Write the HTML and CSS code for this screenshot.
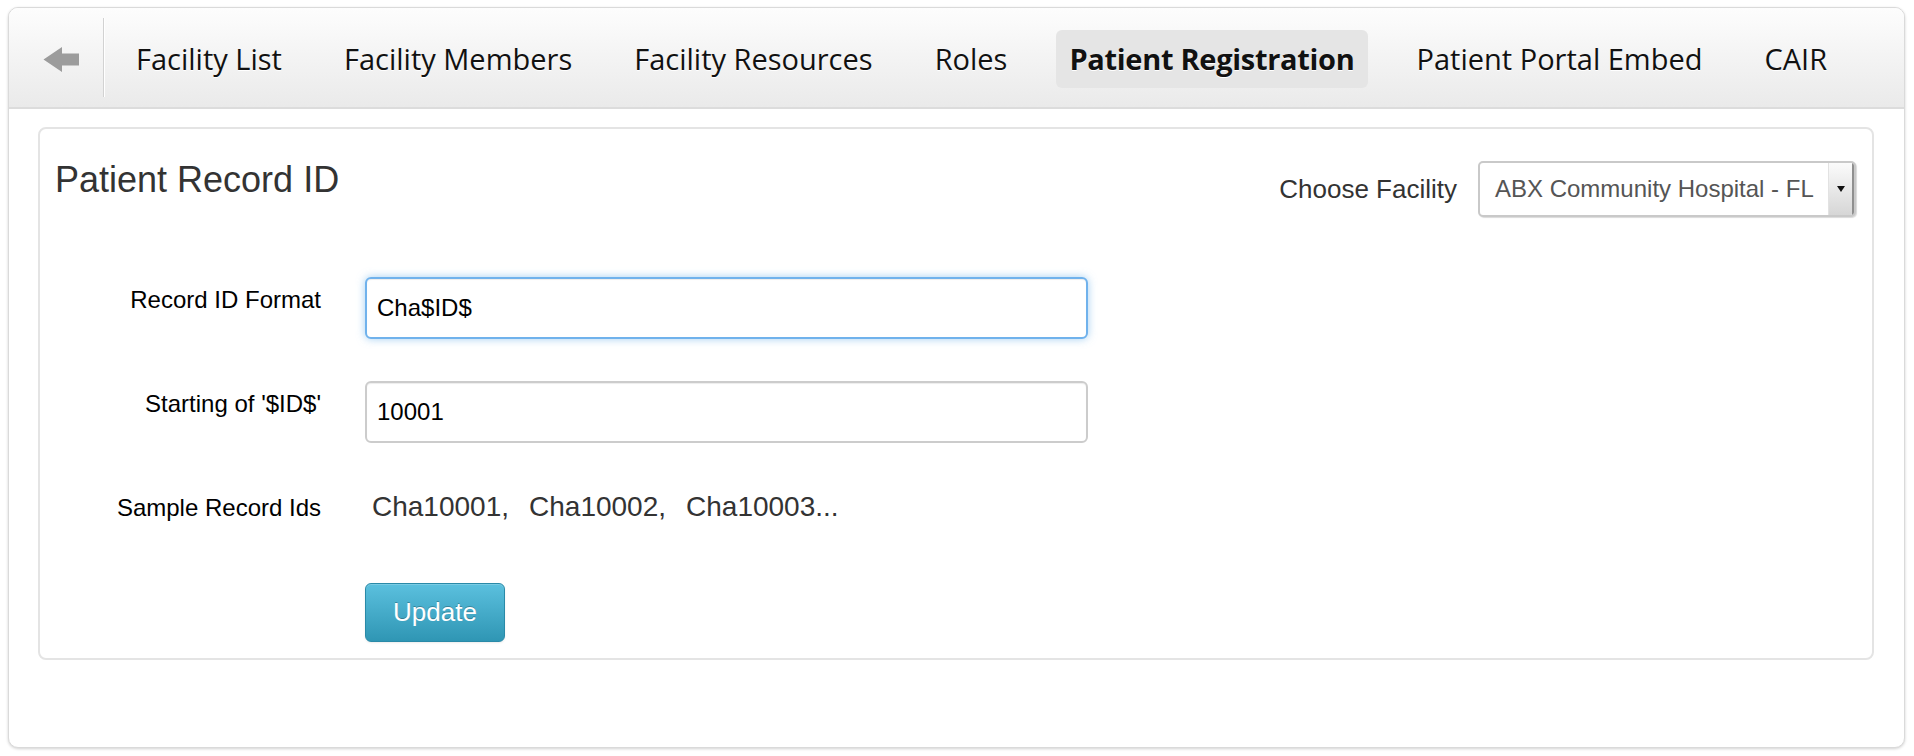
FILE: index.html
```html
<!DOCTYPE html>
<html>
<head>
<meta charset="utf-8">
<title>Patient Registration</title>
<link rel="stylesheet" href="styles.css">
</head>
<body>
<div class="frame">
  <nav class="navbar">
    <span class="back">
      <svg width="36" height="27" viewBox="0 0 36 27"><path d="M0.5 13.5 L19 1 L19 7.5 L36 7.5 L36 19.5 L19 19.5 L19 26 Z" fill="#9c9c9c"/></svg>
    </span>
    <span class="divider"></span>
    <ul class="tabs">
      <li class="tab">Facility List</li>
      <li class="tab">Facility Members</li>
      <li class="tab">Facility Resources</li>
      <li class="tab">Roles</li>
      <li class="tab active">Patient Registration</li>
      <li class="tab">Patient Portal Embed</li>
      <li class="tab">CAIR</li>
    </ul>
  </nav>
  <div class="main">
    <section class="card">
      <div class="card-head">
        <h2 class="title">Patient Record ID</h2>
        <div class="facility">
          <span class="facility-label">Choose Facility</span>
          <div class="select">
            <span class="select-text">ABX Community Hospital - FL</span>
            <span class="select-btn"><span class="caret"></span></span>
          </div>
        </div>
      </div>
      <div class="form">
        <div class="row">
          <label class="label">Record ID Format</label>
          <input class="field focus" type="text" value="Cha$ID$">
        </div>
        <div class="row">
          <label class="label">Starting of '$ID$'</label>
          <input class="field" type="text" value="10001">
        </div>
        <div class="row row-static">
          <span class="label">Sample Record Ids</span>
          <div class="samples"><span>Cha10001,</span><span>Cha10002,</span><span>Cha10003...</span></div>
        </div>
        <div class="row row-last">
          <span class="label"></span>
          <button class="btn" type="button">Update</button>
        </div>
      </div>
    </section>
  </div>
</div>
</body>
</html>
```

FILE: styles.css
```css
* { box-sizing: border-box; }
html, body { margin: 0; background: #fff; }
body {
  padding: 7px 9px 8px 8px;
  font-family: "Liberation Sans", Arial, sans-serif;
}
.frame {
  height: 741px;
  border: 1px solid #dadada;
  border-radius: 10px;
  box-shadow: 0 1px 3px rgba(0,0,0,0.18);
  overflow: hidden;
  background: #fff;
}
.navbar {
  height: 101px;
  display: flex;
  align-items: flex-start;
  padding-left: 34px;
  background: linear-gradient(#fdfdfd, #eaeaea);
  border-bottom: 2px solid #dcdcdc;
}
.back {
  display: block;
  width: 36px;
  height: 27px;
  margin-top: 38px;
}
.back svg { display: block; }
.divider {
  display: block;
  width: 2px;
  height: 79px;
  margin-top: 10px;
  margin-left: 24px;
  border-left: 1px solid #d2d2d2;
  border-right: 1px solid #ffffff;
}
.tabs {
  list-style: none;
  margin: 22px 0 0 18px;
  padding: 0;
  display: flex;
  gap: 36px;
}
.tab {
  height: 58px;
  line-height: 58px;
  padding: 0 13px;
  border-radius: 6px;
  font-family: "Open Sans", sans-serif;
  font-size: 29px;
  color: #111;
  text-shadow: 0 1px 0 #fff;
  white-space: nowrap;
}
.tab.active {
  background: #e5e5e5;
  font-weight: bold;
  letter-spacing: -0.3px;
}
.main {
  padding: 18px 30px 0 29px;
}
.card {
  border: 2px solid #e4e4e4;
  border-radius: 8px;
  padding: 31px 16px 16px 15px;
}
.card-head {
  display: flex;
  justify-content: space-between;
  align-items: flex-start;
}
.title {
  margin: 0;
  font-size: 36px;
  line-height: 40px;
  font-weight: normal;
  color: #333;
}
.facility {
  display: flex;
  align-items: center;
  gap: 21px;
  margin-top: 1px;
}
.facility-label {
  font-size: 26px;
  color: #333;
}
.select {
  width: 378px;
  height: 56px;
  display: flex;
  border: 2px solid #c9c9c9;
  border-radius: 5px;
  background: #fff;
  box-shadow: 1px 1px 1px rgba(0,0,0,0.15);
  overflow: hidden;
}
.select-text {
  flex: 1;
  padding-left: 15px;
  font-size: 24px;
  line-height: 52px;
  color: #555;
  white-space: nowrap;
  overflow: hidden;
}
.select-btn {
  flex: 0 0 26px;
  display: flex;
  align-items: center;
  justify-content: center;
  background: linear-gradient(#fbfbfb, #d6d6d6);
  border-left: 1px solid #e2e2e2;
  border-right: 2px solid #8f8f8f;
}
.caret {
  width: 0;
  height: 0;
  border-left: 4px solid transparent;
  border-right: 4px solid transparent;
  border-top: 6px solid #111;
}
.form {
  margin-top: 60px;
}
.row {
  display: flex;
  align-items: flex-start;
  margin-bottom: 42px;
}
.row-last { margin-bottom: 0; }
.row-static { height: 56px; }
.label {
  flex: 0 0 266px;
  margin-right: 44px;
  padding-top: 11px;
  text-align: right;
  font-size: 24px;
  line-height: 24px;
  color: #000;
}
.field {
  width: 723px;
  height: 62px;
  margin: 0;
  padding: 0 10px;
  border: 2px solid #cccccc;
  border-radius: 6px;
  background: #fff;
  font-family: "Liberation Sans", Arial, sans-serif;
  font-size: 24px;
  color: #000;
  outline: none;
  box-shadow: inset 0 1px 1px rgba(0,0,0,0.075);
}
.field.focus {
  border-color: #70b2ec;
  box-shadow: inset 0 1px 1px rgba(0,0,0,0.075), 0 0 8px rgba(102,175,233,0.6);
}
.samples {
  display: flex;
  gap: 20px;
  margin-left: 7px;
  padding-top: 6px;
  font-size: 28px;
  line-height: 32px;
  color: #333;
}
.btn {
  width: 140px;
  height: 59px;
  margin: 0;
  padding: 0;
  border: 1px solid #2a8aa8;
  border-radius: 6px;
  background: linear-gradient(#5bc0de, #2f96b4);
  color: #fff;
  font-family: "Liberation Sans", Arial, sans-serif;
  font-size: 26px;
  text-shadow: 0 -1px 0 rgba(0,0,0,0.25);
  box-shadow: inset 0 1px 0 rgba(255,255,255,0.2), 0 1px 2px rgba(0,0,0,0.08);
}
```
